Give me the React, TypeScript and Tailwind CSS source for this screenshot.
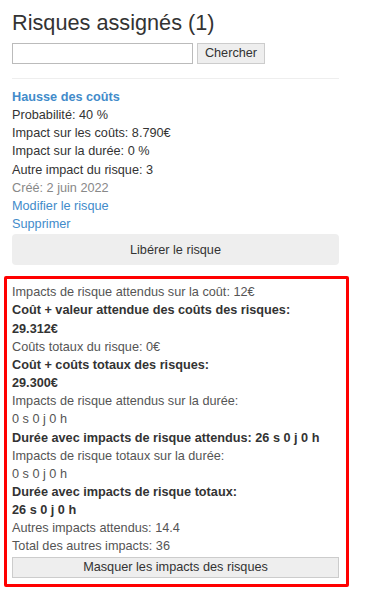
export default function App() {
  return (
    <div className="min-h-[595px] bg-white px-3 text-[12.7px] leading-[18.15px] text-[#333] [font-family:'Liberation_Sans',Arial,sans-serif]">
      <h1 className="pt-[10px] text-[21.7px] leading-[25px] text-[#333]">Risques assignés (1)</h1>

      <div className="mt-[8px] flex items-center gap-[4px]">
        <input
          type="text"
          className="h-[21px] w-[181px] border border-[#bbb] bg-white px-1 outline-none"
        />
        <button className="h-[21px] w-[68px] border border-[#ccc] bg-[#eee] text-[12.7px] leading-[19px] text-[#333]">
          Chercher
        </button>
      </div>

      <hr className="mt-[14px] w-[327px] border-t border-[#eee]" />

      <div className="mt-[9px] w-[327px]">
        <a className="block font-bold text-[#428bca]">Hausse des coûts</a>
        <div>Probabilité: 40 %</div>
        <div>Impact sur les coûts: 8.790€</div>
        <div>Impact sur la durée: 0 %</div>
        <div>Autre impact du risque: 3</div>
        <div className="text-[#888]">Créé: 2 juin 2022</div>
        <a className="block text-[#428bca]">Modifier le risque</a>
        <a className="block text-[#428bca]">Supprimer</a>
        <button className="mt-[1px] h-[31px] w-full rounded-[4px] bg-[#eee] text-[12.7px] text-[#333]">
          Libérer le risque
        </button>
      </div>

      <div className="mt-[11px] -ml-2 w-[345px] rounded-[2px] border-[3px] border-[#f00] pl-[5px] pr-[7px] pt-[4px] pb-[6px]">
        <div className="text-[#555]">Impacts de risque attendus sur la coût: 12€</div>
        <div className="font-bold">Coût + valeur attendue des coûts des risques:</div>
        <div className="font-bold">29.312€</div>
        <div className="text-[#555]">Coûts totaux du risque: 0€</div>
        <div className="font-bold">Coût + coûts totaux des risques:</div>
        <div className="font-bold">29.300€</div>
        <div className="text-[#555]">Impacts de risque attendus sur la durée:</div>
        <div className="text-[#555]">0 s 0 j 0 h</div>
        <div className="font-bold">Durée avec impacts de risque attendus: 26 s 0 j 0 h</div>
        <div className="text-[#555]">Impacts de risque totaux sur la durée:</div>
        <div className="text-[#555]">0 s 0 j 0 h</div>
        <div className="font-bold">Durée avec impacts de risque totaux:</div>
        <div className="font-bold">26 s 0 j 0 h</div>
        <div className="text-[#555]">Autres impacts attendus: 14.4</div>
        <div className="text-[#555]">Total des autres impacts: 36</div>
        <button className="mt-[1px] h-[21px] w-full border border-[#ccc] bg-[#eee] text-[12.7px] leading-[19px] text-[#333]">
          Masquer les impacts des risques
        </button>
      </div>
    </div>
  );
}
